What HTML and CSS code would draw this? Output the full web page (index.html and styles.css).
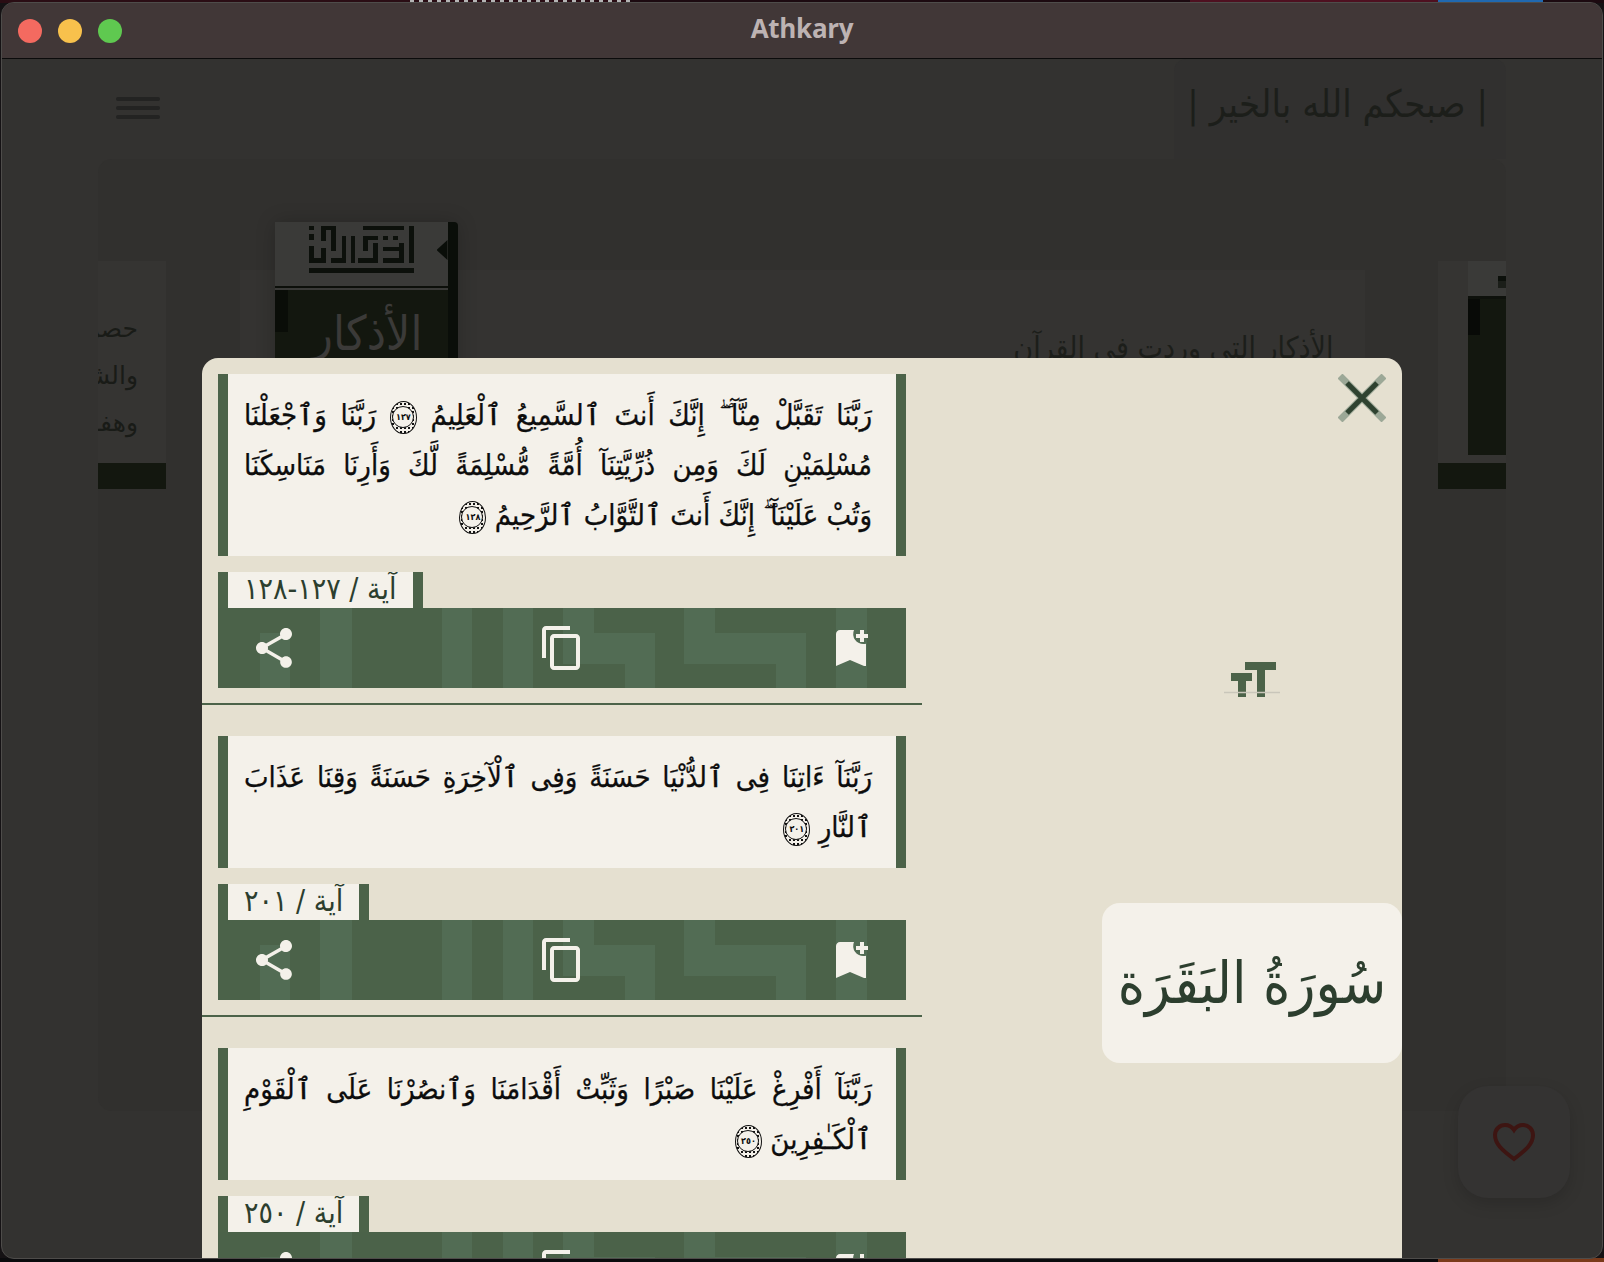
FILE: index.html
```html
<!DOCTYPE html>
<html lang="ar">
<head>
    <meta charset="UTF-8">
    <meta name="viewport" content="width=device-width, initial-scale=1.0">
    <title>Athkary</title>
    <link rel="stylesheet" href="styles.css">
</head>
<body>
<svg class="defs" width="0" height="0">
    <symbol id="bar-pattern" viewBox="0 0 688 80" preserveAspectRatio="none">
        <path d="M42 25h30v55h-30zM102 0h32v80h-32zM224 0h30v80h-30zM285 0h30v80h-30zM345 0h31v25h61v55h-30v-24h-62zM466 0h31v25h91v55h-30v-24h-92zM618 0h31v80h-31z"/>
    </symbol>
    <symbol id="ic-share" viewBox="0 0 24 24">
        <path d="M18 16.08c-.76 0-1.44.3-1.96.77L8.91 12.7c.05-.23.09-.46.09-.7s-.04-.47-.09-.7l7.05-4.11c.54.5 1.25.81 2.04.81 1.66 0 3-1.34 3-3s-1.34-3-3-3-3 1.34-3 3c0 .24.04.47.09.7L8.04 9.81C7.5 9.31 6.79 9 6 9c-1.66 0-3 1.34-3 3s1.34 3 3 3c.79 0 1.5-.31 2.04-.81l7.12 4.16c-.05.21-.08.43-.08.65 0 1.61 1.31 2.92 2.92 2.92 1.61 0 2.92-1.31 2.92-2.92s-1.31-2.92-2.92-2.92z"/>
    </symbol>
    <symbol id="ic-copy" viewBox="0 0 24 24">
        <path d="M16 1H4c-1.1 0-2 .9-2 2v14h2V3h12V1zm3 4H8c-1.1 0-2 .9-2 2v14c0 1.1.9 2 2 2h11c1.1 0 2-.9 2-2V7c0-1.1-.9-2-2-2zm0 16H8V7h11v14z"/>
    </symbol>
    <symbol id="ic-mark" viewBox="0 0 24 24">
        <path d="M21 7h-2v2h-2V7h-2V5h2V3h2v2h2v2zm-2 14-7-3-7 3V5c0-1.1.9-2 2-2h7a5.002 5.002 0 0 0 5 7c.34 0 .67-.03 1-.1V21z"/>
    </symbol>
</svg>

<div class="window">
    <div class="titlebar">
        <div class="lights">
            <span class="light red"></span>
            <span class="light yellow"></span>
            <span class="light green"></span>
        </div>
        <div class="app-name">Athkary</div>
    </div>

    <div class="page">
        <div class="top-row">
            <div class="burger"><span></span><span></span><span></span></div>
            <div class="greeting" dir="rtl">| صبحكم الله بالخير |</div>
        </div>
        <div class="panel">
            <div class="slider">
                <div class="side-card left-card">
                    <div class="side-text" dir="rtl">
                        <p>حصن</p>
                        <p>والشكر</p>
                        <p>وهفوات</p>
                    </div>
                    <div class="side-strip"></div>
                </div>
                <div class="main-card">
                    <div class="book">
                        <div class="book-top">
                            <svg class="kufic" viewBox="0 0 105 47">
                                <path fill="#0c100b" d="M100 0h5v37h-5zM0 42h105v5H0zM54 0h41v4H54zM74 32h21v5H74zM90 17h5v20h-5zM74 21h16v4H74zM84 10h5v4h-5zM74 10h5v4h-5zM54 10h15v4H54zM54 10h5v15h-5zM49 32h20v5H49zM64 17h5v20h-5zM42 10h4v27h-4zM22 32h15v5H22zM33 10h4v27h-4zM22 0h5v25h-5zM12 0h15v4H12zM12 0h5v15h-5zM0 20h5v17H0zM0 32h17v5H0zM12 22h5v15h-5zM0 0h5v4H0zM0 8h5v6H0z"/>
                            </svg>
                        </div>
                        <div class="book-line"></div>
                        <div class="book-cover" dir="rtl">الأذكار</div>
                        <div class="book-notch"></div>
                    </div>
                    <div class="main-title" dir="rtl">الأذكار التي وردت في القرآن</div>
                </div>
                <div class="side-card right-card">
                    <div class="side-book">
                        <div class="side-top"><span class="logo-end"></span></div>
                        <div class="side-cover"></div>
                    </div>
                    <div class="side-strip"></div>
                </div>
            </div>
        </div>
        <div class="fav">
            <svg width="44" height="40" viewBox="0 0 44 40">
                <path fill="none" stroke="#3d1512" stroke-width="4" d="M22 37C10 28 3 22 3 13 3 7 8 3 13 3c4 0 7 2 9 5 2-3 5-5 9-5 5 0 10 4 10 10 0 9-7 15-19 24z"/>
            </svg>
        </div>
    </div>

    <div class="modal">
        <div class="verses">
            <section class="ayah">
                <div class="ayah-text" dir="rtl">
                    <span class="line">رَبَّنَا تَقَبَّلْ مِنَّآ ۖ إِنَّكَ أَنتَ ٱلسَّمِيعُ ٱلْعَلِيمُ <span class="num">١٢٧</span> رَبَّنَا وَٱجْعَلْنَا</span>
                    <span class="line">مُسْلِمَيْنِ لَكَ وَمِن ذُرِّيَّتِنَآ أُمَّةً مُّسْلِمَةً لَّكَ وَأَرِنَا مَنَاسِكَنَا</span>
                    <span class="line last">وَتُبْ عَلَيْنَآ ۖ إِنَّكَ أَنتَ ٱلتَّوَّابُ ٱلرَّحِيمُ <span class="num">١٢٨</span></span>
                </div>
                <div class="ayah-tag" dir="rtl">آية / ١٢٧-١٢٨</div>
                <div class="actions">
                    <svg class="pattern"><use href="#bar-pattern"/></svg>
                    <svg class="icon"><use href="#ic-share"/></svg>
                    <svg class="icon"><use href="#ic-copy"/></svg>
                    <svg class="icon"><use href="#ic-mark"/></svg>
                </div>
            </section>
            <section class="ayah">
                <div class="ayah-text" dir="rtl">
                    <span class="line">رَبَّنَآ ءَاتِنَا فِى ٱلدُّنْيَا حَسَنَةً وَفِى ٱلْآخِرَةِ حَسَنَةً وَقِنَا عَذَابَ</span>
                    <span class="line last">ٱلنَّارِ <span class="num">٢٠١</span></span>
                </div>
                <div class="ayah-tag" dir="rtl">آية / ٢٠١</div>
                <div class="actions">
                    <svg class="pattern"><use href="#bar-pattern"/></svg>
                    <svg class="icon"><use href="#ic-share"/></svg>
                    <svg class="icon"><use href="#ic-copy"/></svg>
                    <svg class="icon"><use href="#ic-mark"/></svg>
                </div>
            </section>
            <section class="ayah">
                <div class="ayah-text" dir="rtl">
                    <span class="line">رَبَّنَآ أَفْرِغْ عَلَيْنَا صَبْرًا وَثَبِّتْ أَقْدَامَنَا وَٱنصُرْنَا عَلَى ٱلْقَوْمِ</span>
                    <span class="line last">ٱلْكَـٰفِرِينَ <span class="num">٢٥٠</span></span>
                </div>
                <div class="ayah-tag" dir="rtl">آية / ٢٥٠</div>
                <div class="actions">
                    <svg class="pattern"><use href="#bar-pattern"/></svg>
                    <svg class="icon"><use href="#ic-share"/></svg>
                    <svg class="icon"><use href="#ic-copy"/></svg>
                    <svg class="icon"><use href="#ic-mark"/></svg>
                </div>
            </section>
        </div>

        <div class="tools">
            <svg class="close" width="48" height="48" viewBox="0 0 48 48">
                <path stroke="#9ca897" stroke-width="7" d="M2 2l44 44M46 2L2 46"/>
                <path stroke="#2f4230" stroke-width="5" d="M9 9l30 30M39 9L9 39"/>
            </svg>
            <svg class="font-size" width="56" height="36" viewBox="0 0 56 36">
                <path fill="#4c6349" d="M21 0h31v8H41v27h-8V8H21zM7 11h21v8h-6v16h-8V19H7z"/>
                <path stroke="#c9c6ba" stroke-width="1.5" d="M0 30.500h56"/>
            </svg>
            <div class="surah" dir="rtl">سُورَةُ البَقَرَة</div>
        </div>
    </div>
</div>
</body>
</html>
```

FILE: styles.css
```css
html, body {
    margin: 0;
    height: 100%;
}

body {
    width: 1604px;
    height: 1262px;
    overflow: hidden;
    background:
        repeating-linear-gradient(90deg, #b5b5b5 0, #b5b5b5 4px, transparent 4px, transparent 9px) 410px 0 / 220px 2px no-repeat,
        linear-gradient(90deg, #2a0d14 0, #2a0d14 630px, #1c0a10 630px, #1c0a10 1190px, #4e1020 1190px, #4e1020 1438px, #2068b0 1438px, #2068b0 1543px, #1c0a10 1543px) 0 0 / 100% 3px no-repeat,
        linear-gradient(90deg, #0b0b0d 0, #0b0b0d 1438px, #7a3a1a 1438px) 0 100% / 100% 4px no-repeat,
        #151214;
    font-family: "DejaVu Sans", sans-serif;
    box-sizing: border-box;
    padding: 2px 1px 3px;
}

.defs {
    position: absolute;
}

.window {
    position: relative;
    height: 100%;
    box-sizing: border-box;
    border: 1px solid #4e4c4a;
    border-radius: 13px;
    overflow: hidden;
    background-color: #333230;
    display: flex;
    flex-direction: column;
}

.titlebar {
    flex: none;
    height: 56px;
    background-color: #413737;
    border-bottom: 1px solid #0b0b0b;
    box-sizing: border-box;
    display: flex;
    align-items: center;
    position: relative;
}

.lights {
    display: flex;
    gap: 16px;
    padding-left: 16px;
}

.light {
    width: 24px;
    height: 24px;
    border-radius: 50%;
}

.red { background-color: #f46a60; }
.yellow { background-color: #f8c14c; }
.green { background-color: #5fc950; }

.app-name {
    position: absolute;
    left: 0;
    right: 0;
    top: 0;
    line-height: 50px;
    text-align: center;
    font-family: "Open Sans", sans-serif;
    font-size: 26px;
    font-weight: 700;
    letter-spacing: -0.3px;
    color: #bdb3b3;
}

/* dimmed page behind the dialog */
.page {
    flex: 1;
    position: relative;
}

.top-row {
    height: 100px;
    display: flex;
    justify-content: space-between;
    padding: 0 96px;
}

.burger {
    display: flex;
    flex-direction: column;
    gap: 5px;
    padding: 38px 0 0 18px;
}

.burger span {
    width: 44px;
    height: 4px;
    border-radius: 2px;
    background-color: #232322;
}

.greeting {
    width: 332px;
    box-sizing: border-box;
    background-color: #31302f;
    border-radius: 12px 12px 0 0;
    padding: 23px 18px 0 0;
    font-family: "DejaVu Sans Condensed", "DejaVu Sans", sans-serif;
    font-size: 38px;
    color: #1c1e1a;
    white-space: nowrap;
}

.panel {
    margin: 0 96px;
    height: 952px;
    background-color: #31302e;
    border-radius: 14px;
    overflow: hidden;
}

.slider {
    padding-top: 102px;
    display: flex;
    justify-content: space-between;
}

.side-card {
    width: 68px;
    height: 228px;
    background-color: #353432;
    position: relative;
    display: flex;
    flex-direction: column;
    justify-content: flex-end;
    overflow: hidden;
}

.side-strip {
    height: 26px;
    flex: none;
    background-color: #13170f;
}

.side-text {
    position: absolute;
    top: 50px;
    right: 28px;
    width: 120px;
    font-size: 25px;
    color: #191b17;
    white-space: nowrap;
}

.side-text p {
    margin: 0 0 11px;
    line-height: 36px;
}

.side-book {
    flex: 1;
    margin: 0 0 8px 30px;
    display: flex;
    flex-direction: column;
}

.side-top {
    height: 38px;
    background-color: #3a3a38;
    border-bottom: 3px solid #0e110c;
    box-sizing: border-box;
    padding: 2px 0 0 30px;
}

.logo-end {
    display: block;
    height: 13px;
    border-bottom: 5px solid #0c100b;
    box-shadow: 0 7px 0 #1b1e19;
}

.side-cover {
    flex: 1;
    background: linear-gradient(#080a07, #080a07) 0 0 / 12px 36px no-repeat, #13170f;
}

.main-card {
    width: 1125px;
    height: 240px;
    margin-top: 9px;
    background-color: #343331;
    display: flex;
    justify-content: space-between;
    padding: 0 31px 0 35px;
    box-sizing: border-box;
}

.book {
    position: relative;
    width: 183px;
    margin-top: -48px;
    height: 300px;
    background-color: #13170f;
    border-right: 10px solid #0a0e09;
    box-sizing: border-box;
    border-radius: 4px 4px 0 0;
    box-shadow: 0 0 20px rgba(0, 0, 0, 0.2);
}

.book-top {
    height: 64px;
    background-color: #3a3a38;
    padding: 4px 0 0 34px;
    box-sizing: border-box;
}

.kufic {
    width: 105px;
    height: 47px;
    display: block;
}

.book-line {
    height: 2px;
    background-color: #3a3a38;
    border-top: 2px solid #0c0f0a;
}

.book-cover {
    height: 100px;
    background: linear-gradient(#0a0d08, #0a0d08) 0 0 / 13px 42px no-repeat;
    padding: 12px 25px 0 0;
    text-align: right;
    font-family: "DejaVu Sans Condensed", "DejaVu Sans", sans-serif;
    font-size: 48px;
    line-height: 62px;
    color: #3b3a38;
}

.book-notch {
    position: absolute;
    top: 18px;
    right: 0;
    width: 11px;
    height: 20px;
    background-color: #0a0e09;
    clip-path: polygon(100% 0, 100% 100%, 0 50%);
}

.main-title {
    padding-top: 60px;
    font-family: "DejaVu Sans Condensed", "DejaVu Sans", sans-serif;
    font-size: 30px;
    color: #1c1e1a;
    white-space: nowrap;
}

.fav {
    position: absolute;
    left: 1456px;
    top: 1027px;
    width: 112px;
    height: 112px;
    border-radius: 30px;
    background-color: #343332;
    box-shadow: 0 6px 16px rgba(0, 0, 0, 0.15);
    display: flex;
    align-items: center;
    justify-content: center;
}

/* dialog */
.modal {
    position: absolute;
    left: 200px;
    top: 355px;
    width: 1200px;
    height: 910px;
    background-color: #e5e0d0;
    border-radius: 16px 16px 0 0;
    display: flex;
    overflow: hidden;
}

.verses {
    width: 720px;
    flex: none;
}

.ayah {
    padding: 31px 16px 15px;
    border-bottom: 2px solid #4c6349;
    display: flex;
    flex-direction: column;
}

.ayah:first-child {
    padding-top: 16px;
}

.ayah-text {
    background-color: #f4f1ea;
    border-left: 10px solid #4c6349;
    border-right: 10px solid #4c6349;
    padding: 16px 24px 16px 16px;
    font-family: "DejaVu Sans Condensed", "DejaVu Sans", serif;
    font-size: 29px;
    line-height: 50px;
    color: #0d0d0d;
    -webkit-text-stroke: 0.25px #0d0d0d;
    white-space: nowrap;
}

.line {
    display: block;
    height: 50px;
    text-align: justify;
    text-align-last: justify;
}

.line.last {
    text-align: right;
    text-align-last: right;
}

/* ayah end mark */
.num {
    position: relative;
    isolation: isolate;
    display: inline-block;
    width: 27px;
    height: 33px;
    line-height: 30px;
    border: 1.5px solid #111;
    border-radius: 50%;
    background: radial-gradient(circle, #111 1px, transparent 1.3px) 0 0 / 4px 4px;
    text-align: center;
    text-align-last: center;
    font-family: "DejaVu Sans Condensed", "DejaVu Sans", sans-serif;
    font-size: 9px;
    font-weight: bold;
    -webkit-text-stroke: 0;
    vertical-align: middle;
    box-sizing: border-box;
}

.num::before {
    content: "";
    position: absolute;
    z-index: -1;
    left: 1px;
    top: 4px;
    width: 22px;
    height: 22px;
    box-sizing: border-box;
    border: 1.5px solid #111;
    border-radius: 50%;
    background-color: #f4f1ea;
}

.ayah-tag {
    margin-top: 16px;
    align-self: flex-start;
    height: 36px;
    line-height: 33px;
    overflow: hidden;
    background-color: #f4f1ea;
    border-left: 10px solid #4c6349;
    border-right: 10px solid #4c6349;
    padding: 0 16px;
    font-family: "DejaVu Sans Condensed", "DejaVu Sans", sans-serif;
    font-size: 30px;
    color: #2c3e2e;
    white-space: nowrap;
}

.actions {
    position: relative;
    height: 80px;
    background-color: #4b6249;
    display: flex;
    justify-content: space-between;
    align-items: center;
    padding: 0 32px;
    flex: none;
}

.pattern {
    position: absolute;
    left: 0;
    top: 0;
    width: 100%;
    height: 100%;
    fill: #526c54;
}

.icon {
    position: relative;
    width: 48px;
    height: 48px;
    fill: #f4f1ea;
}

.tools {
    flex: 1;
    min-width: 0;
    padding-left: 180px;
    display: flex;
    flex-direction: column;
    align-items: center;
}

.close {
    align-self: flex-end;
    margin: 16px 16px 0 0;
}

.font-size {
    margin-top: 240px;
}

.surah {
    margin-top: 205px;
    width: 100%;
    height: 160px;
    background-color: #f4f1ea;
    border-radius: 18px;
    display: flex;
    align-items: center;
    justify-content: center;
    font-family: "DejaVu Sans Condensed", "DejaVu Sans", sans-serif;
    font-size: 58px;
    color: #2c3e2e;
    white-space: nowrap;
}
```
